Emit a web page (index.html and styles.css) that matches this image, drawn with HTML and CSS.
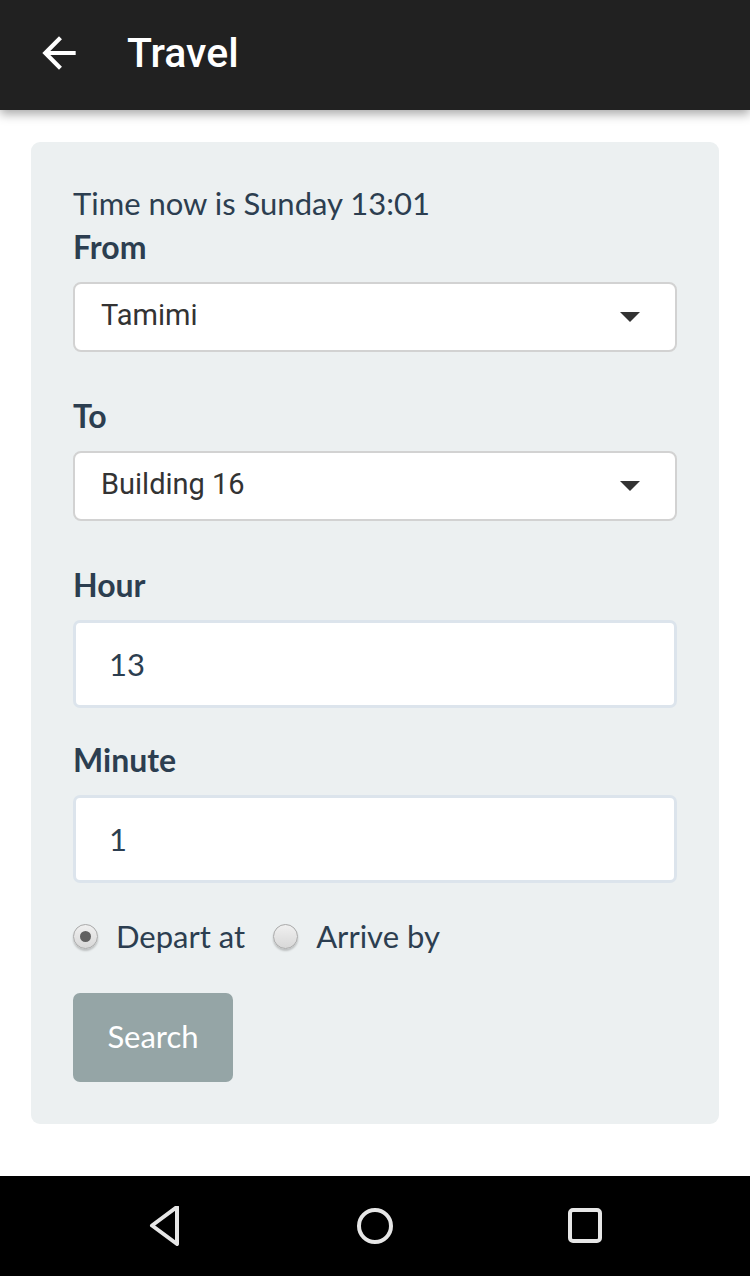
FILE: index.html
```html
<!DOCTYPE html>
<html lang="en">

<head>
    <meta charset="UTF-8">
    <meta name="viewport" content="width=device-width, initial-scale=1.0">
    <title>Travel</title>
    <link rel="stylesheet" href="styles.css">
</head>

<body>

    <header class="toolbar">
        <svg class="back-icon" viewBox="0 0 24 24" width="50" height="50">
            <path d="M20 11H7.83l5.59-5.59L12 4l-8 8 8 8 1.41-1.41L7.83 13H20v-2z" fill="#ffffff"/>
        </svg>
        <h1 class="toolbar-title">Travel</h1>
    </header>

    <main class="content">
        <form class="well" onsubmit="event.preventDefault();">
            <p class="now">Time now is Sunday 13:01</p>

            <div class="form-group">
                <label for="from">From</label>
                <div class="select-wrap">
                    <select id="from">
                        <option>Tamimi</option>
                    </select>
                </div>
            </div>

            <div class="form-group">
                <label for="to">To</label>
                <div class="select-wrap">
                    <select id="to">
                        <option>Building 16</option>
                    </select>
                </div>
            </div>

            <div class="form-group small-gap">
                <label for="hour">Hour</label>
                <input type="text" id="hour" value="13">
            </div>

            <div class="form-group small-gap">
                <label for="minute">Minute</label>
                <input type="text" id="minute" value="1">
            </div>

            <div class="radios">
                <label class="radio"><input type="radio" name="mode" checked> Depart at</label>
                <label class="radio"><input type="radio" name="mode"> Arrive by</label>
            </div>

            <button type="submit">Search</button>
        </form>
    </main>

    <nav class="navbar">
        <svg viewBox="0 0 40 40" width="40" height="40">
            <path d="M32 1 L7 19.5 L32 38 Z" fill="none" stroke="#e6e6e6" stroke-width="4" stroke-linejoin="round"/>
        </svg>
        <svg viewBox="0 0 40 40" width="40" height="40">
            <circle cx="20" cy="20" r="16" fill="none" stroke="#e6e6e6" stroke-width="4"/>
        </svg>
        <svg viewBox="0 0 40 40" width="40" height="40">
            <rect x="5" y="4" width="30" height="31" rx="3" fill="none" stroke="#e6e6e6" stroke-width="4"/>
        </svg>
    </nav>

</body>
</html>
```

FILE: styles.css
```css
body {
    font-family: 'Lato', 'Open Sans', sans-serif;
    background-color: #ffffff;
    color: #2c3e50;
    margin: 0;
    min-height: 100vh;
    display: flex;
    flex-direction: column;
}

.toolbar {
    background-color: #212121;
    height: 110px;
    display: flex;
    align-items: center;
    padding-left: 34px;
    box-shadow: 0 4px 10px rgba(0, 0, 0, 0.35);
    position: relative;
    z-index: 1;
}

.back-icon {
    margin-top: -4px;
}

.toolbar-title {
    font-family: 'Roboto', sans-serif;
    font-weight: 500;
    font-size: 41px;
    color: #ffffff;
    margin: -4px 0 0 43px;
}

.content {
    flex: 1;
    padding: 32px 31px 0;
}

.well {
    background-color: #ecf0f1;
    border-radius: 9px;
    padding: 40px 42px 42px;
}

.now {
    margin: 0;
    font-size: 31px;
    line-height: 43px;
}

.form-group {
    margin-bottom: 42px;
}

.form-group.small-gap {
    margin-bottom: 30px;
}

.form-group label {
    display: block;
    font-weight: bold;
    font-size: 32px;
    line-height: 43px;
    margin-bottom: 14px;
}

.select-wrap {
    position: relative;
}

.select-wrap::after {
    content: "";
    position: absolute;
    right: 37px;
    top: 30px;
    border-left: 10.5px solid transparent;
    border-right: 10.5px solid transparent;
    border-top: 10px solid #333333;
}

select {
    appearance: none;
    -webkit-appearance: none;
    width: 100%;
    height: 70px;
    background-color: #ffffff;
    border: 2px solid #d2d2d2;
    border-radius: 8px;
    padding: 0 26px 4px;
    font-family: 'Roboto', sans-serif;
    font-size: 29px;
    color: #333333;
    box-sizing: border-box;
}

input[type="text"] {
    width: 100%;
    height: 88px;
    box-sizing: border-box;
    border: 3px solid #dce4ec;
    border-radius: 7px;
    padding: 0 33px;
    font-family: 'Lato', sans-serif;
    font-size: 31px;
    color: #2c3e50;
    background-color: #ffffff;
}

.radios {
    display: flex;
    align-items: center;
    gap: 28px;
    margin-top: 32px;
    height: 43px;
}

.radio {
    display: flex;
    align-items: center;
    gap: 18px;
    font-size: 31px;
    line-height: 43px;
}

.radio input {
    appearance: none;
    -webkit-appearance: none;
    margin: 0;
    width: 25px;
    height: 25px;
    border-radius: 50%;
    border: 1px solid #a9a9a9;
    background: linear-gradient(#f0f0f0, #d8d8d8);
    box-shadow: 0 2px 2px rgba(0, 0, 0, 0.2);
    position: relative;
}

.radio input:checked::after {
    content: "";
    position: absolute;
    left: 6px;
    top: 6px;
    width: 11px;
    height: 11px;
    border-radius: 50%;
    background-color: #616161;
}

button {
    margin-top: 35px;
    width: 160px;
    height: 89px;
    padding-bottom: 4px;
    background-color: #95a5a6;
    color: #ffffff;
    border: none;
    border-radius: 7px;
    font-family: 'Lato', sans-serif;
    font-size: 31px;
    cursor: pointer;
}

.navbar {
    background-color: #000000;
    height: 100px;
    display: flex;
    justify-content: center;
    align-items: center;
    gap: 170px;
}
```
